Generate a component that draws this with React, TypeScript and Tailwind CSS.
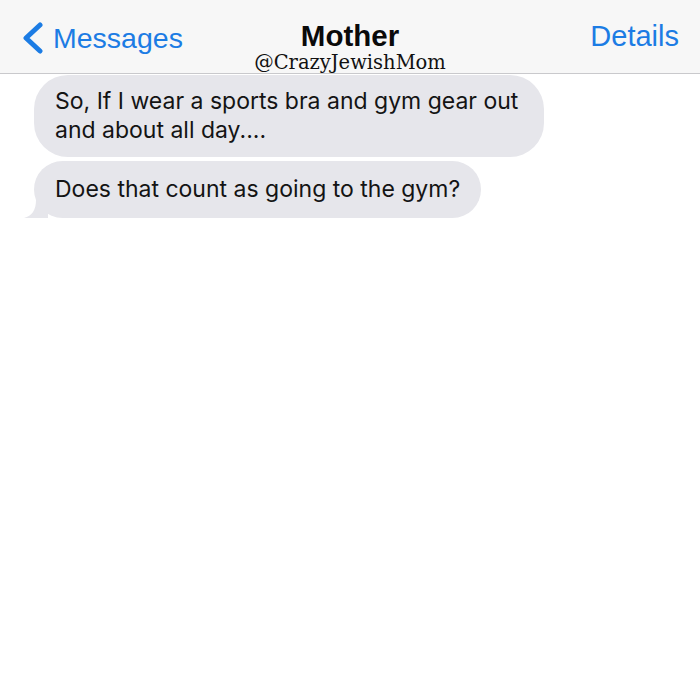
export default function App() {
  return (
    <div className="h-[700px] w-[700px] overflow-hidden bg-white font-['Liberation_Sans',Arial,sans-serif]">
      <header className="grid h-[74px] grid-cols-[1fr_auto_1fr] items-start border-b border-[#c9c9cc] bg-[#f7f7f7]">
        <div className="flex items-center pl-[20px] pt-[22px] text-[#1c7ce4]">
          <svg width="26" height="32" viewBox="0 0 26 32" fill="none">
            <path d="M20 3 L6 16 L20 29" stroke="#1c7ce4" strokeWidth="5" strokeLinecap="round" strokeLinejoin="round" />
          </svg>
          <span className="ml-[7px] text-[28.5px] leading-none">Messages</span>
        </div>
        <div className="flex flex-col items-center pt-[21px]">
          <span className="text-[29.5px] font-bold leading-none text-[#0a0a0a]">Mother</span>
          <span className="mt-[2px] font-['DejaVu_Serif',serif] text-[19.5px] leading-none text-[#111]">@CrazyJewishMom</span>
        </div>
        <div className="justify-self-end pr-[21px] pt-[22px] text-[29px] leading-none text-[#1c7ce4]">Details</div>
      </header>

      <div className="flex flex-col items-start gap-[4px] pl-[34px] pt-[1px] font-['Inter',sans-serif] text-[23px] leading-[29px] text-[#141414]">
        <div className="w-[510px] rounded-[34px] bg-[#e6e6eb] px-[21px] pb-[12px] pt-[12px]">
          So, If I wear a sports bra and gym gear out and about all day....
        </div>
        <div className="relative rounded-[30px] bg-[#e6e6eb] px-[21px] py-[14px]">
          Does that count as going to the gym?
          <svg className="absolute bottom-0 left-[-10px]" width="24" height="18" viewBox="0 0 24 18">
            <path d="M24 0 L24 18 L0 18 C8 16 12 10 12 0 Z" fill="#e6e6eb" />
          </svg>
        </div>
      </div>
    </div>
  );
}
